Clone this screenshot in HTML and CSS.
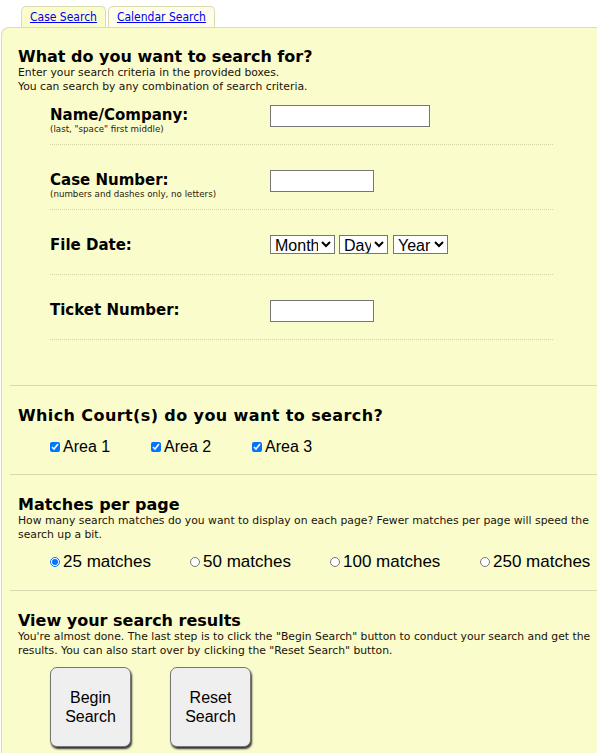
FILE: index.html
```html
<!DOCTYPE html>
<html>
<head>
<meta charset="utf-8">
<link rel="stylesheet" href="styles.css">
</head>
<body>
<div class="tabs">
  <div class="tab active"><a href="#">Case Search</a></div>
  <div class="tab"><a href="#">Calendar Search</a></div>
</div>
<div class="panel">
  <div class="section sec-first">
    <h2>What do you want to search for?</h2>
    <p class="desc">Enter your search criteria in the provided boxes.<br>You can search by any combination of search criteria.</p>
    <div class="rows">
      <div class="row row-first">
        <div class="label"><span class="lbl">Name/Company:</span><span class="sub">(last, "space" first middle)</span></div>
        <div class="field"><input type="text" class="txt txt-long"></div>
      </div>
      <div class="row">
        <div class="label"><span class="lbl">Case Number:</span><span class="sub">(numbers and dashes only, no letters)</span></div>
        <div class="field"><input type="text" class="txt txt-short"></div>
      </div>
      <div class="row">
        <div class="label"><span class="lbl">File Date:</span></div>
        <div class="field selects">
          <select class="sel sel-month"><option>Month</option></select>
          <select class="sel sel-day"><option>Day</option></select>
          <select class="sel sel-year"><option>Year</option></select>
        </div>
      </div>
      <div class="row">
        <div class="label"><span class="lbl">Ticket Number:</span></div>
        <div class="field"><input type="text" class="txt txt-short"></div>
      </div>
    </div>
  </div>
  <hr class="rule">
  <div class="section sec-courts">
    <h2 class="h-courts">Which Court(s) do you want to search?</h2>
    <div class="choices checks">
      <label class="choice"><input type="checkbox" checked>Area 1</label>
      <label class="choice"><input type="checkbox" checked>Area 2</label>
      <label class="choice"><input type="checkbox" checked>Area 3</label>
    </div>
  </div>
  <hr class="rule">
  <div class="section sec-matches">
    <h2>Matches per page</h2>
    <p class="desc">How many search matches do you want to display on each page? Fewer matches per page will speed the search up a bit.</p>
    <div class="choices radios">
      <label class="choice r1"><input type="radio" name="m" checked>25 matches</label>
      <label class="choice r2"><input type="radio" name="m">50 matches</label>
      <label class="choice r3"><input type="radio" name="m">100 matches</label>
      <label class="choice r4"><input type="radio" name="m">250 matches</label>
    </div>
  </div>
  <hr class="rule">
  <div class="section sec-results">
    <h2>View your search results</h2>
    <p class="desc">You're almost done. The last step is to click the "Begin Search" button to conduct your search and get the results. You can also start over by clicking the "Reset Search" button.</p>
    <div class="buttons">
      <button class="btn">Begin<br>Search</button>
      <button class="btn">Reset<br>Search</button>
    </div>
  </div>
</div>
</body>
</html>
```
FILE: styles.css
```css
html, body {
  margin: 0;
  padding: 0;
  background: #ffffff;
  overflow: hidden;
}
body {
  font-family: "DejaVu Sans", Verdana, sans-serif;
  color: #000;
}
.tabs {
  display: flex;
  gap: 2px;
  padding: 6px 0 0 21px;
  height: 21px;
}
.tab {
  border: 1px solid #dadab0;
  border-bottom: none;
  border-radius: 5px 5px 0 0;
  background: #fdfdea;
  padding: 3px 8px 0 8px;
  font-family: "DejaVu Sans Condensed", "DejaVu Sans", sans-serif;
  font-size: 12px;
  line-height: 15px;
}
.tab.active {
  background: #fafccc;
}
.tab a {
  color: #0000ee;
  text-decoration: underline;
}
.panel {
  margin-left: 1px;
  border-left: 1px solid #dcdcb4;
  border-top: 1px solid #dcdcb4;
  border-top-left-radius: 8px;
  background: #fafccc;
  min-height: 740px;
}
.section {
  padding-left: 16px;
  padding-right: 6px;
}
h2 {
  margin: 0;
  font-size: 16px;
  line-height: 20px;
  font-weight: bold;
  padding-top: 1px;
  height: 19px;
}
.h-courts {
  letter-spacing: 0.4px;
}
.desc {
  margin: 0;
  font-family: "DejaVu Sans", sans-serif;
  font-size: 10.8px;
  line-height: 14px;
  color: #1a1208;
}
.sec-first {
  padding-top: 18px;
  padding-bottom: 45px;
}
.rows {
  margin-left: 32px;
  width: 503px;
}
.row {
  display: grid;
  grid-template-columns: 220px 1fr;
  align-items: start;
  min-height: 28px;
  padding: 25px 0 11px;
  border-bottom: 1px dotted #d4d4a4;
}
.row-first {
  padding-top: 11px;
}
.label {
  display: flex;
  flex-direction: column;
  height: 28px;
}
.lbl {
  font-size: 15px;
  line-height: 17px;
  font-weight: bold;
  padding-top: 2px;
}
.sub {
  font-family: "DejaVu Sans", sans-serif;
  font-size: 8.7px;
  line-height: 10px;
  color: #2a1a08;
}
.txt {
  box-sizing: border-box;
  height: 22px;
  border: 1px solid #767676;
  background: #fff;
  margin: 0;
  padding: 1px 2px;
}
.txt-long { width: 160px; }
.txt-short { width: 104px; }
.selects {
  display: flex;
  gap: 4px;
}
.sel {
  box-sizing: border-box;
  height: 19px;
  margin: 0;
  font-family: "Liberation Sans", Arial, sans-serif;
  font-size: 16px;
  border: 1px solid #767676;
  border-radius: 0;
  background: #fff;
  color: #000;
  padding: 0;
}
.sel-month { width: 65px; }
.sel-day { width: 49px; }
.sel-year { width: 55px; margin-left: 1px; }
.rule {
  margin: 0 0 0 8px;
  border: none;
  border-top: 1px solid #d8d8b0;
  height: 0;
}
.sec-courts {
  padding-top: 19px;
  padding-bottom: 18px;
}
.choices {
  display: flex;
  margin-left: 32px;
  font-family: "Liberation Sans", Arial, sans-serif;
  font-size: 16px;
  line-height: 18px;
}
.checks {
  margin-top: 13px;
}
.checks .choice {
  width: 101px;
  display: flex;
  align-items: center;
}
.choice input {
  margin: 0 3px 0 0;
  width: 10px;
  height: 10px;
}
.radios {
  margin-top: 11px;
  font-size: 17px;
}
.radios .choice {
  display: flex;
  align-items: center;
}
.r1, .r2 { width: 140px; }
.r3 { width: 150px; }
.sec-matches {
  padding-top: 19px;
  padding-bottom: 19px;
}
.sec-results {
  padding-top: 19px;
}
.buttons {
  display: flex;
  gap: 39px;
  margin: 9px 0 0 32px;
}
.btn {
  box-sizing: border-box;
  width: 81px;
  height: 80px;
  background: #efefef;
  border: 1px solid #767676;
  border-radius: 7px;
  box-shadow: 1px 2px 2px #333;
  font-family: "Liberation Sans", Arial, sans-serif;
  font-size: 16px;
  line-height: 19px;
  color: #000;
  padding: 0;
}
```
